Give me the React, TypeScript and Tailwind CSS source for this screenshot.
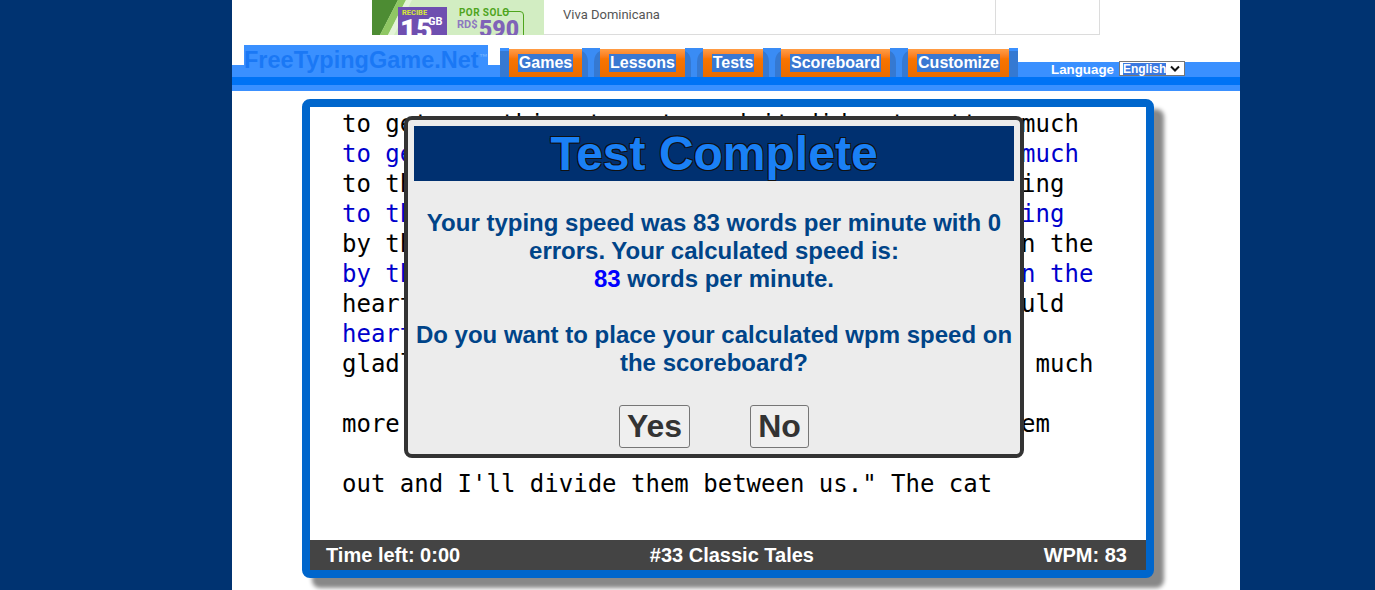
const tabs = [
  { label: "Games", width: "w-[73px]" },
  { label: "Lessons", width: "w-[85px]" },
  { label: "Tests", width: "w-[60px]" },
  { label: "Scoreboard", width: "w-[109px]" },
  { label: "Customize", width: "w-[101px]" },
];

const storyLines = [
  { text: "to get something to eat, and it did not matter much", typed: false },
  { text: "to get something to eat, and it did not matter much", typed: true },
  { text: "to them how they got it. One day they were sitting", typed: false },
  { text: "to them how they got it. One day they were sitting", typed: true },
  { text: "by the fire, watching some chestnuts roasting on the", typed: false },
  { text: "by the fire, watching some chestnuts roasting on the", typed: true },
  { text: 'hearth. How to get them was the question. "I would', typed: false },
  { text: "hearth. How to get them was the question.", typed: true },
  { text: 'gladly get them," said the monkey, "but you are much', typed: false },
  { text: "\u00a0", typed: true },
  { text: "more skillful at such things than I am. Pull them", typed: false },
  { text: "\u00a0", typed: true },
  { text: "out and I'll divide them between us.\" The cat", typed: false },
];

function AdPicture() {
  return (
    <svg width="172" height="35" viewBox="0 0 172 35" className="block shrink-0">
      <rect width="172" height="35" fill="#d2edc2" />
      <polygon points="0,0 26,0 8,35 0,35" fill="#4d8c33" />
      <polygon points="26,0 34,0 16,35 8,35" fill="#8fc763" />
      <polygon points="34,0 40,0 22,35 16,35" fill="#e4f4d8" />
      <rect x="26" y="7" width="49" height="28" fill="#6f4fb0" />
      <text x="30" y="15" fontSize="7.5" fontWeight="700" fill="#d6e83a" fontFamily="Roboto, sans-serif">RECIBE</text>
      <text x="28" y="39" fontSize="28" fontWeight="900" fill="#ffffff" fontFamily="Roboto, sans-serif">15</text>
      <text x="56" y="25" fontSize="11" fontWeight="700" fill="#ffffff" fontFamily="Roboto, sans-serif">GB</text>
      <text x="87" y="16" fontSize="10" fontWeight="700" letterSpacing="0.4" fill="#4fa51e" fontFamily="Roboto, sans-serif">POR SOLO</text>
      <path d="M131 11.5 H148 Q151.5 11.5 151.5 15 V35" fill="none" stroke="#4fa51e" strokeWidth="1" />
      <text x="85" y="28" fontSize="11" fontWeight="700" fill="#8d78c0" fontFamily="Roboto, sans-serif">RD$</text>
      <text x="107" y="37" fontSize="23" fontWeight="900" fill="#7f62b8" fontFamily="Roboto, sans-serif">590</text>
    </svg>
  );
}

function TabSeparator({ edge }: { edge?: boolean }) {
  return (
    <div className={`${edge ? "w-[9px]" : "w-[18px]"} h-[29px] bg-[#3579d2] shrink-0`}>
      {edge ? (
        <div className="h-[3px] bg-[#3a90ff]" />
      ) : (
        <svg width="18" height="29" viewBox="0 0 18 29" className="block">
          <path d="M0 0 H18 V3 Q12 6 12 14 V29 H6 V14 Q6 6 0 3 Z" fill="#3a8cf5" />
        </svg>
      )}
    </div>
  );
}

export default function App() {
  return (
    <div className="h-screen overflow-hidden bg-[#003371] font-['Liberation_Sans',Arial,sans-serif]">
      <div className="ml-[232px] w-[1008px] h-full bg-white">
        {/* Ad strip */}
        <div className="ml-[140px] w-[728px] h-[35px] flex bg-white overflow-hidden">
          <AdPicture />
          <div className="w-[452px] pl-[19px] pt-[6px] border-b border-r border-[#dcdcdc] text-[13px] leading-[18px] text-[#555555] font-['Roboto',sans-serif]">
            Viva Dominicana
          </div>
          <div className="flex-1 border-b border-r border-[#dcdcdc]" />
        </div>

        {/* Header */}
        <div className="mt-[10px] flex items-end h-[32px]">
          <div className="w-[12px] h-[12px] bg-[#3a90ff]" />
          <div className="w-[244px] h-[32px] bg-[#3a90ff] text-[23.5px] leading-[31px] font-bold text-[#1a78f5] whitespace-nowrap">
            FreeTypingGame.Net
            <span className="relative -top-[8px] text-[9px] leading-none text-[#6db0ff]">™</span>
          </div>
          <div className="w-[12px] h-[12px] bg-[#3a90ff]" />
          <nav className="flex h-[29px]">
            <TabSeparator edge />
            {tabs.map((tab, i) => (
              <div key={tab.label} className="flex">
                <div className={`${tab.width} h-[29px] pt-px bg-white`}>
                  <div className="h-[28px] flex items-center justify-center bg-gradient-to-b from-[#ff9d45] via-[#f97400] via-35% to-[#ea6c00]">
                    <span className="bg-[#3a78d2] text-white text-[16px] leading-[18px] font-bold px-px">{tab.label}</span>
                  </div>
                </div>
                <TabSeparator edge={i === tabs.length - 1} />
              </div>
            ))}
          </nav>
          <div className="flex-1 h-[15px] bg-[#3a90ff] flex items-end pl-[33px] pb-px">
            <span className="relative top-px text-[13.33px] leading-[15px] font-bold text-white">Language</span>
            <div className="ml-[5px] w-[66px] h-[15px] bg-white border border-[#767676] flex items-center pl-[3px]">
              <span className="bg-[#3a78e0] text-white text-[12px] leading-[12px] font-bold">English</span>
              <svg width="10" height="7" viewBox="0 0 10 7" className="ml-[4px]">
                <path d="M1 1.5 L5 5.5 L9 1.5" fill="none" stroke="#111111" strokeWidth="2" />
              </svg>
            </div>
          </div>
        </div>
        <div className="h-[8px] bg-[#0073f5]" />
        <div className="h-[6px] bg-[#3a90ff]" />

        {/* Test card */}
        <div className="relative ml-[70px] mt-[8px] w-[852px] h-[479px] bg-white border-[8px] border-[#0066cc] rounded-[8px] shadow-[10px_10px_4px_#888888] flex flex-col">
          <div className="flex-1 pl-[32px] pt-[2px] font-['DejaVu_Sans_Mono',monospace] text-[24px] leading-[30px] whitespace-pre">
            {storyLines.map((line, i) => (
              <div key={i} className={line.typed ? "text-[#0000cc]" : "text-black"}>
                {line.text}
              </div>
            ))}
          </div>
          <div className="h-[30px] bg-[#444444] flex items-center justify-between pl-[16px] pr-[19px] text-[20px] font-bold text-white">
            <span>Time left: 0:00</span>
            <span className="pr-[40px]">#33 Classic Tales</span>
            <span>WPM: 83</span>
          </div>

          {/* Result dialog */}
          <div className="absolute left-[94px] top-[9px] w-[620px] h-[342px] bg-[#ececec] border-[4px] border-[#333333] rounded-[8px] p-[6px] text-center">
            <div className="h-[55px] bg-[#003070] text-[48px] leading-[55px] font-bold text-[#1a80f5] [text-shadow:-1px_-1px_0_#111,1px_-1px_0_#111,-1px_1px_0_#111,1px_1px_0_#111]">
              Test Complete
            </div>
            <div className="mt-[28px] text-[24px] leading-[28px] font-bold text-[#004488]">
              Your typing speed was 83 words per minute with 0 errors. Your calculated speed is:
              <br />
              <span className="text-[#0000ff]">83</span> words per minute.
              <br />
              <br />
              Do you want to place your calculated wpm speed on the scoreboard?
            </div>
            <div className="mt-[28px] flex justify-center gap-[60px]">
              <button className="w-[71px] h-[43px] pb-[2px] bg-[#efefef] border border-[#767676] rounded-[3px] text-[32px] leading-none font-bold text-[#333333]">
                Yes
              </button>
              <button className="w-[59px] h-[43px] pb-[2px] bg-[#efefef] border border-[#767676] rounded-[3px] text-[32px] leading-none font-bold text-[#333333]">
                No
              </button>
            </div>
          </div>
        </div>
      </div>
    </div>
  );
}
